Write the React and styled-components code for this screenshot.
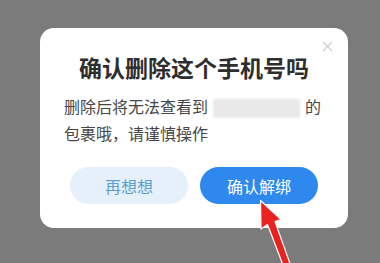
import styled, { createGlobalStyle } from 'styled-components';

const GlobalStyle = createGlobalStyle`
  html, body {
    margin: 0;
    padding: 0;
    background: #7b7b7b;
  }
  body {
    font-family: "Noto Sans CJK SC", "Noto Sans", sans-serif;
  }
`;

export default function App() {
  return (
    <Page>
      <GlobalStyle />
      <Card>
        <Close>
          <svg width="11" height="11" viewBox="0 0 11 11">
            <path d="M1 1L10 10M10 1L1 10" stroke="#cfcfcf" strokeWidth="1.3" />
          </svg>
        </Close>
        <Title>确认删除这个手机号吗</Title>
        <Body>
          删除后将无法查看到<Blur />的包裹哦，请谨慎操作
        </Body>
        <Actions>
          <Button variant="light">再想想</Button>
          <Button variant="primary">确认解绑</Button>
        </Actions>
      </Card>
      <Arrow width="380" height="263" viewBox="0 0 380 263">
        <polygon
          points="260.5,200.5 261,229 267.5,224.5 283,265 290.5,265 275,221.5 281,219.5"
          fill="#e8231f"
          stroke="#fff"
          strokeWidth="1.2"
          strokeLinejoin="round"
        />
      </Arrow>
    </Page>
  );
}

const Page = styled.div`
  position: relative;
  width: 380px;
  height: 263px;
  overflow: hidden;
  padding: 28px 0 0 40px;
  box-sizing: border-box;
`;

const Card = styled.div`
  position: relative;
  width: 308px;
  box-sizing: border-box;
  background: #fff;
  border-radius: 14px;
  padding: 24px 24px 24px;
`;

const Close = styled.div`
  position: absolute;
  top: 13px;
  right: 15px;
  line-height: 0;
`;

const Title = styled.h2`
  margin: 0;
  text-align: center;
  font-size: 23px;
  line-height: 31px;
  font-weight: 700;
  color: #2e2e2e;
`;

const Body = styled.p`
  margin: 10px 0 0;
  font-size: 16px;
  line-height: 27px;
  color: #474747;
`;

const Blur = styled.span`
  display: inline-block;
  vertical-align: middle;
  width: 87px;
  height: 19px;
  margin: 0 5px;
  background: #e9e9e9;
  border-radius: 3px;
  filter: blur(1px);
`;

const Actions = styled.div`
  display: flex;
  justify-content: center;
  gap: 12px;
  margin-top: 20px;
`;

const Button = styled.button`
  width: 118px;
  height: 37px;
  border: none;
  border-radius: 19px;
  font-family: inherit;
  font-size: 16px;
  background: ${p => (p.variant === 'primary' ? '#2e88ee' : '#e6f0fb')};
  color: ${p => (p.variant === 'primary' ? '#fff' : '#5b9fd2')};
`;

const Arrow = styled.svg`
  position: absolute;
  left: 0;
  top: 0;
  pointer-events: none;
`;
